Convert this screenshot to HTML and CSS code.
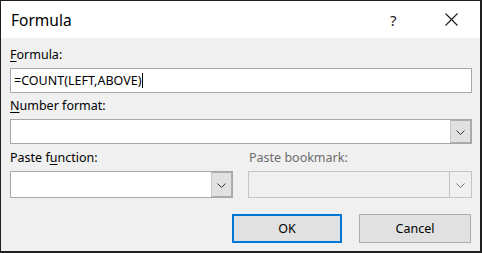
FILE: index.html
```html
<!DOCTYPE html>
<html>
<head>
<meta charset="utf-8">
<link rel="stylesheet" href="styles.css">
</head>
<body>
<div class="window">
  <div class="titlebar">
    <span class="title">Formula</span>
    <span class="help">?</span>
    <span class="close"><svg width="13" height="13" viewBox="0 0 13 13"><path d="M0.5 0.5 L12.5 12.5 M12.5 0.5 L0.5 12.5" stroke="#1a1a1a" stroke-width="1.1" fill="none"/></svg></span>
  </div>
  <div class="content">
    <div class="label"><u>F</u>ormula:</div>
    <div class="field input"><span class="text">=COUNT(LEFT,ABOVE)</span><span class="caret"></span></div>
    <div class="label gap5"><u>N</u>umber format:</div>
    <div class="field select">
      <div class="value"></div>
      <div class="drop"><svg width="9" height="5" viewBox="0 0 9 5"><path d="M0.5 0.5 L4.5 4.5 L8.5 0.5" stroke="#333" stroke-width="1" fill="none"/></svg></div>
    </div>
    <div class="row gap6">
      <div class="col left">
        <div class="label">Paste f<u>u</u>nction:</div>
        <div class="field select tall">
          <div class="value"></div>
          <div class="drop"><svg width="9" height="5" viewBox="0 0 9 5"><path d="M0.5 0.5 L4.5 4.5 L8.5 0.5" stroke="#333" stroke-width="1" fill="none"/></svg></div>
        </div>
      </div>
      <div class="col right">
        <div class="label disabled">Paste bookmark:</div>
        <div class="field select tall off">
          <div class="value"></div>
          <div class="drop"><svg width="9" height="5" viewBox="0 0 9 5"><path d="M0.5 0.5 L4.5 4.5 L8.5 0.5" stroke="#777" stroke-width="1" fill="none"/></svg></div>
        </div>
      </div>
    </div>
    <div class="buttons">
      <div class="btn default">OK</div>
      <div class="btn">Cancel</div>
    </div>
  </div>
</div>
</body>
</html>
```
FILE: styles.css
```css
html, body {
  margin: 0;
  padding: 0;
  background: #f0f0f0;
}
.window {
  box-sizing: border-box;
  width: 482px;
  height: 253px;
  border-top: 1px solid #1f1f1f;
  border-left: 1px solid #1f1f1f;
  border-right: 2px solid #1f1f1f;
  border-bottom: 2px solid #1f1f1f;
  background: #f0f0f0;
  font-family: "Noto Sans", "Open Sans", sans-serif;
  font-size: 12.5px;
  color: #000;
  display: flex;
  flex-direction: column;
}
.titlebar {
  height: 37px;
  background: #fff;
  display: flex;
  align-items: center;
  padding-left: 10px;
}
.title {
  font-size: 15.5px;
  flex: 1;
  margin-top: 1px;
}
.help {
  font-size: 15px;
  width: 14px;
  margin-right: 41px;
  color: #1a1a1a;
}
.close {
  width: 13px;
  height: 13px;
  margin-right: 22px;
  display: flex;
}
.content {
  padding: 9px 8px 0 9px;
  display: flex;
  flex-direction: column;
}
.label {
  height: 16px;
  line-height: 16px;
  margin-bottom: 5px;
  white-space: nowrap;
}
.label u {
  text-decoration-thickness: 1px;
  text-underline-offset: 2px;
}
.label.disabled {
  color: #6d6d6d;
}
.gap5 { margin-top: 5px; }
.gap6 { margin-top: 6px; }
.field {
  box-sizing: border-box;
  height: 25px;
  background: #fff;
  border: 1px solid #a8a8a8;
}
.input {
  display: flex;
  align-items: center;
  padding-left: 3px;
}
.input .text {
  line-height: 16px;
}
.caret {
  display: inline-block;
  width: 1px;
  height: 15px;
  background: #000;
  margin-left: 1px;
}
.select {
  display: flex;
}
.select .value {
  flex: 1;
}
.select .drop {
  box-sizing: border-box;
  width: 21px;
  background: #e1e1e1;
  border: 1px solid #adadad;
  border-left-color: #c8c8c8;
  display: flex;
  align-items: center;
  justify-content: center;
  padding-top: 1px;
}
.select.tall {
  height: 27px;
}
.select.off {
  background: #f0f0f0;
  border-color: #c4c4c4;
}
.select.off .drop {
  background: #f0f0f0;
  border: none;
  border-left: 1px solid #c4c4c4;
  width: 22px;
}
.row {
  display: flex;
  gap: 15px;
}
.col {
  display: flex;
  flex-direction: column;
}
.col.left { width: 223px; }
.col.right { flex: 1; }
.col.right .label { padding-left: 1px; }
.buttons {
  margin-top: 16px;
  display: flex;
  justify-content: flex-end;
  gap: 17px;
  padding-right: 1px;
}
.btn {
  box-sizing: border-box;
  width: 112px;
  height: 29px;
  background: #e1e1e1;
  border: 1px solid #adadad;
  display: flex;
  align-items: center;
  justify-content: center;
}
.btn.default {
  width: 110px;
  border: 2px solid #0078d7;
}
```
